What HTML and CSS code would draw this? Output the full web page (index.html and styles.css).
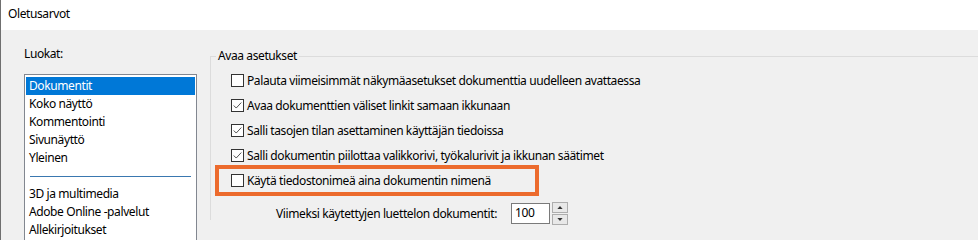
FILE: index.html
```html
<!DOCTYPE html>
<html>
  <head>
    <meta charset="UTF-8">
    <title>Oletusarvot</title>
    <link rel="stylesheet" href="styles.css">
  </head>
  <body>
    <div class="window">
      <div class="titlebar">Oletusarvot</div>
      <div class="dialog">
        <div class="categories">
          <div class="cat-label">Luokat:</div>
          <ul class="listbox">
            <li class="selected">Dokumentit</li>
            <li>Koko näyttö</li>
            <li>Kommentointi</li>
            <li>Sivunäyttö</li>
            <li>Yleinen</li>
            <li class="sep"><span></span></li>
            <li>3D ja multimedia</li>
            <li>Adobe Online -palvelut</li>
            <li>Allekirjoitukset</li>
          </ul>
        </div>

        <fieldset class="group">
          <legend>Avaa asetukset</legend>
          <div class="options">
            <div class="row"><span class="box"></span>Palauta viimeisimmät näkymäasetukset dokumenttia uudelleen avattaessa</div>
            <div class="row"><span class="box"><svg viewBox="0 0 13 13"><polyline points="2,6.5 5,9.5 11,3"/></svg></span>Avaa dokumenttien väliset linkit samaan ikkunaan</div>
            <div class="row"><span class="box"><svg viewBox="0 0 13 13"><polyline points="2,6.5 5,9.5 11,3"/></svg></span>Salli tasojen tilan asettaminen käyttäjän tiedoissa</div>
            <div class="row"><span class="box"><svg viewBox="0 0 13 13"><polyline points="2,6.5 5,9.5 11,3"/></svg></span>Salli dokumentin piilottaa valikkorivi, työkalurivit ja ikkunan säätimet</div>
            <div class="row highlight"><span class="box"></span>Käytä tiedostonimeä aina dokumentin nimenä</div>
            <div class="spin-row">
              <span class="spin-label">Viimeksi käytettyjen luettelon dokumentit:</span>
              <span class="spin-input">100</span>
              <span class="spin-buttons">
                <span class="spin-btn"><svg viewBox="0 0 7 4"><polygon points="0,4 3.5,0 7,4"/></svg></span>
                <span class="spin-btn"><svg viewBox="0 0 7 4"><polygon points="0,0 3.5,4 7,0"/></svg></span>
              </span>
            </div>
          </div>
        </fieldset>
      </div>
    </div>
  </body>
</html>
```

FILE: styles.css
```css
html, body {
  margin:0;
  padding:0;
  height:100%;
  overflow:hidden;
}
body {
  background:#f0f0f0;
  font-family:"Noto Sans", sans-serif;
  font-size:12px;
  letter-spacing:-0.4px;
  color:#000;
}

.window {
  height:100%;
  border-left:1px solid #6f6f6f;
  overflow:hidden;
}
.titlebar {
  height:30px;
  line-height:28px;
  background:#fff;
  padding-left:7px;
}

.dialog {
  display:flex;
  align-items:flex-start;
}

/* left column */
.categories {
  margin-left:23px;
  width:173px;
}
.cat-label {
  height:44px;
  line-height:48px;
}
.listbox {
  list-style:none;
  margin:0;
  padding:2px 1px;
  background:#fff;
  border:1px solid #828790;
  border-bottom:none;
  height:170px;
}
.listbox li {
  height:18px;
  line-height:17px;
  padding-left:3px;
  white-space:nowrap;
}
.listbox li.selected {
  background:#0078d7;
  color:#fff;
}
.listbox li.sep {
  display:flex;
  align-items:center;
  padding:0 4px;
}
.listbox li.sep span {
  flex:1;
  height:1px;
  background:#3a78b0;
}

/* right group */
.group {
  flex:1;
  margin:19px 0 0 13px;
  padding:0;
  border:1px solid #dcdcdc;
  border-right:none;
  border-bottom:none;
  height:170px;
}
.group legend {
  padding:0 2px;
  margin-left:5px;
  line-height:14px;
}
.options {
  padding:5px 0 0 20px;
}

.row {
  display:flex;
  align-items:center;
  height:25px;
  white-space:nowrap;
}
.box {
  width:11px;
  height:11px;
  border:1px solid #333;
  background:#fff;
  margin-right:3px;
  display:flex;
}
.box svg {
  width:11px;
  height:11px;
}
.box polyline {
  fill:none;
  stroke:#333;
  stroke-width:1;
}

.row.highlight {
  width:304px;
  height:23px;
  margin:-3px 0 0 -16px;
  padding-left:12px;
  border:4px solid #ec6b2d;
}

.spin-row {
  display:flex;
  align-items:center;
  margin-top:6px;
  padding-left:45px;
}
.spin-label {
  width:235px;
  white-space:nowrap;
}
.spin-input {
  width:34px;
  height:19px;
  line-height:18px;
  padding-left:3px;
  background:#fff;
  border:1px solid #7a7a7a;
}
.spin-buttons {
  display:flex;
  flex-direction:column;
  gap:1px;
  margin-left:2px;
}
.spin-btn {
  width:14px;
  height:9px;
  border:1px solid #adadad;
  background:#e8e8e8;
  display:flex;
  align-items:center;
  justify-content:center;
}
.spin-btn svg {
  width:6px;
  height:3px;
}
.spin-btn polygon {
  fill:#333;
}
```
